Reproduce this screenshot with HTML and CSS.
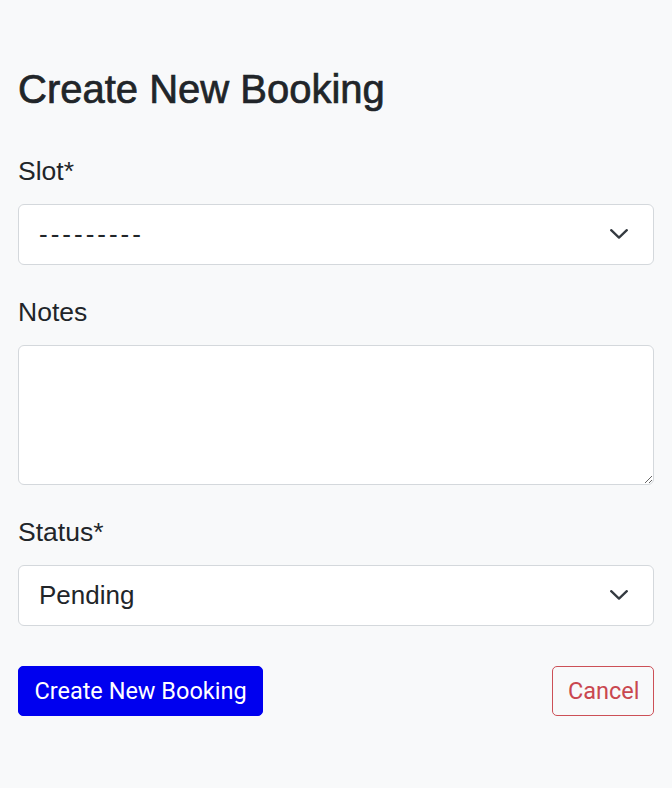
FILE: index.html
```html
<!DOCTYPE html>
<html lang="en">
<head>
<meta charset="utf-8">
<title>Create New Booking</title>
<link rel="stylesheet" href="styles.css">
</head>
<body>
<main class="page">
  <h1 class="title">Create New Booking</h1>
  <form class="form">
    <div class="field">
      <label class="label" for="slot">Slot*</label>
      <div class="select-wrap">
        <select id="slot" class="select select-dashes">
          <option>---------</option>
        </select>
        <svg class="chevron" viewBox="0 0 18 10" width="18" height="10" aria-hidden="true"><path d="M1.2 1.2 9 8.6 16.8 1.2" fill="none" stroke="#343a40" stroke-width="2.3" stroke-linecap="round" stroke-linejoin="round"/></svg>
      </div>
    </div>
    <div class="field">
      <label class="label" for="notes">Notes</label>
      <textarea id="notes" class="textarea" rows="3"></textarea>
    </div>
    <div class="field">
      <label class="label" for="status">Status*</label>
      <div class="select-wrap">
        <select id="status" class="select">
          <option>Pending</option>
        </select>
        <svg class="chevron" viewBox="0 0 18 10" width="18" height="10" aria-hidden="true"><path d="M1.2 1.2 9 8.6 16.8 1.2" fill="none" stroke="#343a40" stroke-width="2.3" stroke-linecap="round" stroke-linejoin="round"/></svg>
      </div>
    </div>
    <div class="actions">
      <button type="submit" class="btn btn-primary">Create New Booking</button>
      <button type="button" class="btn btn-cancel">Cancel</button>
    </div>
  </form>
</main>
</body>
</html>
```

FILE: styles.css
```css
html, body {
  margin: 0;
  padding: 0;
  background: #f8f9fa;
}

body {
  font-family: "Liberation Sans", Arial, sans-serif;
  color: #212529;
  font-size: 26px;
  line-height: 39px;
}

.page {
  padding: 65px 18px 0;
}

.title {
  margin: 0 0 38.5px;
  font-size: 40px;
  line-height: 48px;
  font-weight: 400;
  -webkit-text-stroke: 0.7px #212529;
}

.form {
  display: flex;
  flex-direction: column;
}

.field {
  display: flex;
  flex-direction: column;
  margin-bottom: 27.5px;
}

.label {
  display: block;
  margin-bottom: 13.5px;
  font-size: 26.5px;
}

.select-wrap {
  position: relative;
}

.select {
  display: block;
  width: 100%;
  box-sizing: border-box;
  height: 61px;
  margin: 0;
  padding: 9.5px 60px 9.5px 20px;
  font-family: inherit;
  font-size: 26px;
  line-height: 39px;
  color: #212529;
  background: #fff;
  border: 1.5px solid #d4d8dc;
  border-radius: 6px;
  -webkit-appearance: none;
  appearance: none;
  outline: none;
}

.select-dashes {
  letter-spacing: 3px;
}

.chevron {
  position: absolute;
  right: 26px;
  top: 25px;
  width: 18px;
  height: 10px;
  pointer-events: none;
}

.textarea {
  display: block;
  width: 100%;
  box-sizing: border-box;
  height: 140px;
  margin: 0;
  padding: 9.5px 20px;
  font-family: inherit;
  font-size: 26px;
  line-height: 39px;
  color: #212529;
  background: #fff;
  border: 1.5px solid #d4d8dc;
  border-radius: 6px;
  outline: none;
}

.actions {
  display: flex;
  justify-content: space-between;
  align-items: center;
  margin-top: 12.5px;
}

.btn {
  height: 50px;
  box-sizing: border-box;
  margin: 0;
  padding: 0 15px;
  font-family: Roboto, "Liberation Sans", sans-serif;
  font-size: 23.5px;
  line-height: 36px;
  border-radius: 5px;
  cursor: pointer;
}

.btn-primary {
  width: 245px;
  background: #0000ef;
  color: #fff;
  border: 1px solid #0000ef;
}

.btn-cancel {
  width: 102px;
  background: transparent;
  color: #c9474f;
  border: 1.5px solid #cc5057;
}
```
